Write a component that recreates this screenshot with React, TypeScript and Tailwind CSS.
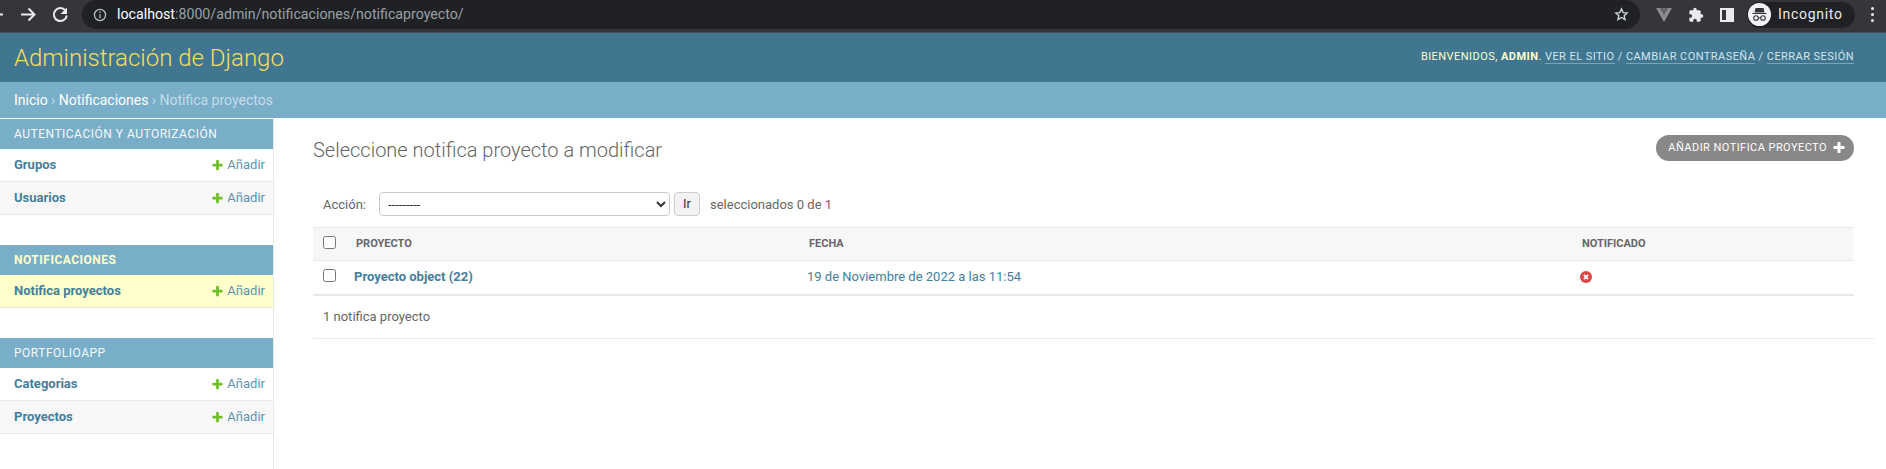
import React from "react";

const Plus = ({ c = "#70bf2b", s = 13 }: { c?: string; s?: number }) => (
  <svg width={s} height={s} viewBox="0 0 1792 1792" className="shrink-0">
    <path fill={c} d="M1600 736v192q0 40-28 68t-68 28h-416v416q0 40-28 68t-68 28h-192q-40 0-68-28t-28-68v-416h-416q-40 0-68-28t-28-68v-192q0-40 28-68t68-28h416v-416q0-40 28-68t68-28h192q40 0 68 28t28 68v416h416q40 0 68 28t28 68z" />
  </svg>
);

const Row = ({ name, alt, active }: { name: string; alt?: boolean; active?: boolean }) => (
  <div className={`flex h-[33px] items-center justify-between border-b border-[#e8e8e8] pl-[14px] pr-2 text-[13px] ${active ? "bg-[#ffffcc]" : alt ? "bg-[#f7f7f7]" : "bg-white"}`}>
    <span className="font-bold text-[#447e9b]">{name}</span>
    <span className="flex items-center gap-[3px] text-[#5f93ad]">
      <Plus />
      Añadir
    </span>
  </div>
);

const Section = ({ title, active, children }: { title: string; active?: boolean; children: React.ReactNode }) => (
  <div className="mb-[30px]">
    <div className={`flex h-[30px] items-center bg-[#79aec8] pl-[14px] text-[12px] tracking-[0.5px] ${active ? "font-bold text-[#ffffcc]" : "text-[#f5f8fa]"}`}>{title}</div>
    {children}
  </div>
);

export default function App() {
  return (
    <div className="flex h-[469px] w-[1886px] flex-col overflow-hidden bg-white font-['Roboto',sans-serif] text-[#333]">
      <div className="flex h-[33px] shrink-0 items-start border-b border-[#4a4d52] bg-[#35363a]">
        <div className="flex h-[29px] w-[82px] shrink-0 items-center">
          <svg width="82" height="29" viewBox="0 0 82 29" fill="none" stroke="#e8eaed" strokeWidth="2">
            <path d="M-4 14.5H3" />
            <path d="M21 14.5H34M28.500 8.500l6 6-6 6" />
            <path d="M65.500 10.500a6.500 6.500 0 1 0 1.300 5" />
            <path d="M67 7.500v6.500h-6.500z" fill="#e8eaed" stroke="none" />
          </svg>
        </div>
        <div className="flex h-[29px] w-[1558px] shrink-0 items-center rounded-[15px] bg-[#202124] pl-[11px] pr-[11px] text-[14.200px]">
          <svg width="14" height="14" viewBox="0 0 14 14" fill="none" stroke="#bdc1c6" strokeWidth="1.300" className="mr-[10px] shrink-0">
            <circle cx="7" cy="7" r="5.600" />
            <path d="M7 6.200v4M7 3.600v1.400" />
          </svg>
          <span className="text-white">localhost</span>
          <span className="text-[#9aa0a6]">:8000/admin/notificaciones/notificaproyecto/</span>
          <svg width="15" height="15" viewBox="0 0 24 24" fill="none" stroke="#d0d3d7" strokeWidth="2.200" className="ml-auto shrink-0">
            <path d="M12 3l2.700 6 6.300.6-4.800 4.200 1.500 6.400L12 16.800l-5.700 3.400 1.500-6.400L3 9.600 9.300 9z" />
          </svg>
        </div>
        <div className="flex h-[29px] flex-1 items-center">
          <svg width="16" height="14" viewBox="0 0 16 14" className="ml-[16px] shrink-0">
            <path fill="#8b8d90" d="M0 0h16L8 14z" />
            <path fill="#5f6165" d="M4 0h3l1 2 1-2h3L8 7z" />
          </svg>
          <svg width="16" height="16" viewBox="0 0 24 24" className="ml-[16px] shrink-0">
            <path fill="#e8eaed" d="M20.500 11H19V7a2 2 0 0 0-2-2h-4V3.500a2.500 2.500 0 0 0-5 0V5H4a2 2 0 0 0-2 2v3.800h1.500a2.700 2.700 0 0 1 0 5.400H2V20a2 2 0 0 0 2 2h3.800v-1.500a2.700 2.700 0 0 1 5.400 0V22H17a2 2 0 0 0 2-2v-4h1.500a2.500 2.500 0 0 0 0-5z" />
          </svg>
          <div className="ml-[16px] flex h-[14px] w-[14px] shrink-0 justify-end border-2 border-[#e8eaed] bg-[#35363a]">
            <div className="h-full w-[6px] bg-[#e8eaed]" />
          </div>
          <div className="ml-[13px] flex h-[26px] w-[108px] shrink-0 items-center rounded-[13px] bg-[#202124] pl-[1px] text-[14px] tracking-[0.7px] text-[#e8eaed]">
            <svg width="23" height="23" viewBox="0 0 23 23" className="mr-[7px] shrink-0">
              <circle cx="11.500" cy="11.500" r="11.500" fill="#f1f3f4" />
              <path fill="#35363a" d="M7.500 5h8l1 4.500h-10zM4.500 10h14v1h-14z" />
              <circle cx="8" cy="15" r="2.300" fill="none" stroke="#35363a" strokeWidth="1.100" />
              <circle cx="15" cy="15" r="2.300" fill="none" stroke="#35363a" strokeWidth="1.100" />
              <path stroke="#35363a" strokeWidth="1.100" d="M10.300 15h2.400" />
            </svg>
            Incognito
          </div>
          <div className="ml-[16px] flex flex-col gap-[3px]">
            <span className="h-[3px] w-[3px] rounded-full bg-[#e8eaed]" />
            <span className="h-[3px] w-[3px] rounded-full bg-[#e8eaed]" />
            <span className="h-[3px] w-[3px] rounded-full bg-[#e8eaed]" />
          </div>
        </div>
      </div>

      <div className="flex h-[49px] shrink-0 items-center justify-between bg-[#417690] pl-[14px] pr-[32px]">
        <div className="text-[24px] font-light text-[#f5dd5d]">Administración de Django</div>
        <div className="text-[11px] tracking-[0.45px] text-[#ffffcc]">
          BIENVENIDOS, <strong className="font-bold">ADMIN</strong>.{" "}
          <span className="border-b border-[#7ea3b5] text-[#cfe6ef]">VER EL SITIO</span>{" "}
          <span className="text-[#cfe6ef]">/</span>{" "}
          <span className="border-b border-[#7ea3b5] text-[#cfe6ef]">CAMBIAR CONTRASEÑA</span>{" "}
          <span className="text-[#cfe6ef]">/</span>{" "}
          <span className="border-b border-[#7ea3b5] text-[#cfe6ef]">CERRAR SESIÓN</span>
        </div>
      </div>

      <div className="flex h-[36px] shrink-0 items-center bg-[#79aec8] pl-[14px] text-[14px] text-white">
        Inicio<span className="px-[3.400px] text-[#c4dce8]">›</span>Notificaciones<span className="px-[3.400px] text-[#c4dce8]">›</span>
        <span className="text-[#c4dce8]">Notifica proyectos</span>
      </div>

      <div className="flex flex-1">
        <aside className="w-[274px] shrink-0 border-r border-[#eaeaea] pt-px">
          <Section title="AUTENTICACIÓN Y AUTORIZACIÓN">
            <Row name="Grupos" />
            <Row name="Usuarios" alt />
          </Section>
          <Section title="NOTIFICACIONES" active>
            <Row name="Notifica proyectos" active />
          </Section>
          <Section title="PORTFOLIOAPP">
            <Row name="Categorias" />
            <Row name="Proyectos" alt />
          </Section>
        </aside>

        <main className="flex-1 pl-[39px] pr-[12px]">
          <div className="flex h-[71px] items-start justify-between pr-[20px]">
            <h1 className="pt-[20px] text-[20px] font-light leading-[24px] text-[#666]">Seleccione notifica proyecto a modificar</h1>
            <div className="mt-[17px] flex h-[26px] items-center gap-[5px] rounded-[13px] bg-[#888] pl-[12px] pr-[8px] text-[11px] tracking-[0.45px] text-white">
              AÑADIR NOTIFICA PROYECTO
              <Plus c="#ffffff" s={14} />
            </div>
          </div>

          <div className="flex h-[38px] items-start pl-[10px] pt-[3px] text-[13px] text-[#666]">
            <span className="mr-[13px] pt-[3px]">Acción:</span>
            <select className="h-[24px] w-[291px] rounded-[4px] border border-[#ccc] bg-white pl-[4px] text-[13px] text-[#333]">
              <option>---------</option>
            </select>
            <button className="ml-[4px] h-[24px] w-[26px] rounded-[4px] border border-[#ccc] bg-[#f2f2f2] text-[13px] text-[#333]">Ir</button>
            <span className="ml-[10px] pt-[3px]">seleccionados 0 de 1</span>
          </div>

          <div className="mr-[20px]">
            <div className="flex h-[34px] items-center border-y border-[#e8e8e8] bg-[#f7f7f7] text-[11px] font-bold text-[#666]">
              <input type="checkbox" className="mb-[4px] ml-[10px] h-[13px] w-[13px]" />
              <span className="ml-[20px] w-[453px]">PROYECTO</span>
              <span className="w-[773px]">FECHA</span>
              <span>NOTIFICADO</span>
            </div>
            <div className="flex h-[35px] items-center border-b-2 border-[#e8e8e8] pb-[1px] text-[13px] text-[#447e9b]">
              <input type="checkbox" className="mb-[3px] ml-[10px] h-[13px] w-[13px]" />
              <span className="ml-[18px] w-[453px] font-bold">Proyecto object (22)</span>
              <span className="w-[773px]">19 de Noviembre de 2022 a las 11:54</span>
              <svg width="12" height="12" viewBox="0 0 13 13">
                <circle cx="6.500" cy="6.500" r="6.500" fill="#dd4646" />
                <path d="M4.300 4.300l4.400 4.400M8.700 4.300l-4.400 4.400" stroke="#fff" strokeWidth="2" />
              </svg>
            </div>
          </div>

          <div className="flex h-[43px] items-center border-b border-[#eaeaea] pl-[10px] text-[13px] text-[#666]">1 notifica proyecto</div>
        </main>
      </div>
    </div>
  );
}
